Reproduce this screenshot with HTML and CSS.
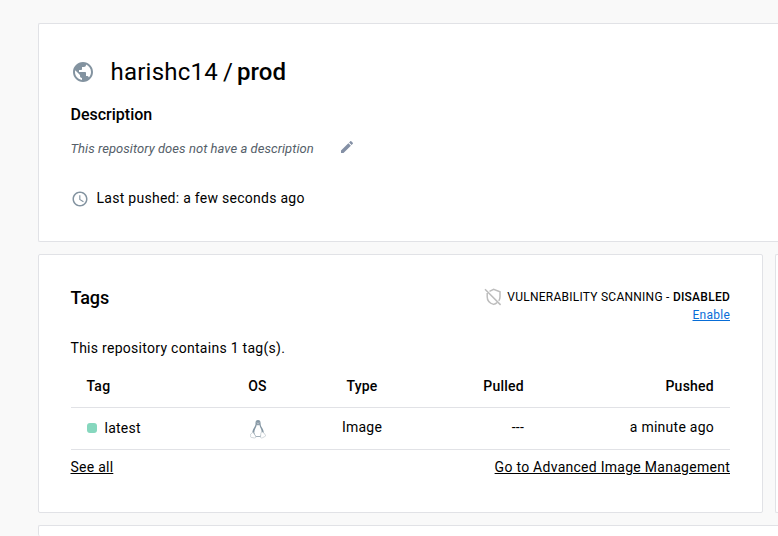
FILE: index.html
```html
<!DOCTYPE html>
<html lang="en">
<head>
<meta charset="utf-8">
<title>harishc14/prod</title>
<link rel="stylesheet" href="styles.css">
</head>
<body>
<main class="page">
  <section class="card summary">
    <h1 class="repo-title">
      <svg class="globe" viewBox="0 0 24 24"><path d="M12 2C6.480 2 2 6.480 2 12s4.480 10 10 10 10-4.480 10-10S17.520 2 12 2zm-1 17.930c-3.950-.490-7-3.850-7-7.930 0-.620.080-1.210.210-1.790L9 15v1c0 1.100.900 2 2 2v1.930zm6.900-2.540c-.260-.810-1-1.390-1.900-1.390h-1v-3c0-.550-.450-1-1-1H8v-2h2c.550 0 1-.450 1-1V7h2c1.100 0 2-.900 2-2v-.410c2.930 1.190 5 4.060 5 7.410 0 2.080-.800 3.970-2.100 5.390z"/></svg>
      <span class="owner">harishc14</span><span class="slash">/</span><span class="repo">prod</span>
    </h1>
    <h2 class="subhead">Description</h2>
    <div class="description">
      <span>This repository does not have a description</span>
      <svg class="pencil" viewBox="0 0 24 24"><path d="M3 17.250V21h3.750L17.810 9.940l-3.750-3.750L3 17.250zM20.710 7.040c.390-.390.390-1.020 0-1.410l-2.340-2.340c-.390-.390-1.020-.390-1.410 0l-1.830 1.830 3.750 3.750 1.830-1.830z"/></svg>
    </div>
    <div class="pushed">
      <svg class="clock" viewBox="0 0 24 24"><path d="M12 2C6.500 2 2 6.500 2 12s4.500 10 10 10 10-4.500 10-10S17.500 2 12 2zm0 18c-4.400 0-8-3.600-8-8s3.600-8 8-8 8 3.600 8 8-3.600 8-8 8zm.5-13H11v6l5.200 3.200.8-1.300-4.500-2.700V7z"/></svg>
      <span>Last pushed: a few seconds ago</span>
    </div>
  </section>
  <div class="columns">
    <section class="card tags">
      <header class="tags-head">
        <h2 class="tags-title">Tags</h2>
        <div class="scan">
          <div class="scan-status">
            <svg class="shield" viewBox="0 0 18 18"><path d="M5.500 3.400 9.600 1.300 16 3.700v5c0 1.500-.4 2.900-1.200 4.100M3.200 5v3.700c0 3.700 2.700 6.600 6.400 7.700 1.300-.4 2.400-1 3.400-1.800M1 1.300l15.600 15.600"/></svg>
            <span>VULNERABILITY SCANNING - <b>DISABLED</b></span>
          </div>
          <a class="enable">Enable</a>
        </div>
      </header>
      <p class="count">This repository contains 1 tag(s).</p>
      <table class="tag-table">
        <thead>
          <tr><th class="c-tag">Tag</th><th class="c-os">OS</th><th class="c-type">Type</th><th class="c-pulled">Pulled</th><th class="c-pushed">Pushed</th></tr>
        </thead>
        <tbody>
          <tr>
            <td class="c-tag"><div class="tag-name"><i class="dot"></i>latest</div></td>
            <td class="c-os"><svg class="tux" viewBox="0 0 18 22">
              <path class="tux-body" d="M9 .8C7 .8 6.100 2.300 6.200 4.300c.1 2.200-.4 3.300-1.500 5.100-1.300 2-2.200 4.200-2 6.200L5.500 20h7l2.900-4.400c.2-2.300-.7-4.500-2-6.400-1.100-1.600-1.500-2.900-1.500-5C11.900 2.100 11 .8 9 .8z"/>
              <path class="tux-belly" d="M7.600 6.300 9 7.200l1.500-.9c.5 1.800 1.200 3.200 1.900 4.600.8 1.800 1 3.600.4 5.600l-1.300 2.600H6.600l-1.700-3.600c-.2-1.700.3-3.300 1-4.700.8-1.500 1.500-2.800 1.700-4.500z"/>
              <path class="tux-face" d="M7.500 3.500h.8M9.800 3.500h.8M7.800 5.100h2.600"/>
              <path class="tux-foot" d="m3.200 14.500 3.200 4.700c.5 1.300-.3 2-1.600 1.900l-3.500-.7c-.9-.3-.7-1-.6-1.900l-.1-1.600c.1-.7 1-.4 1.500-1.100.4-.6.400-1.100 1.100-1.300zM14.200 14.500c.7.1.8.6 1.100 1.100l1.200.7c.5.700.4 1.300 1 1.900.3.600 0 .9-.6 1.200l-3 1.500c-1 .5-2.200.2-2.100-1.100l.5-4.400c.1-.8.700-1.100 1.900-.9z"/>
            </svg></td>
            <td class="c-type">Image</td>
            <td class="c-pulled">---</td>
            <td class="c-pushed">a minute ago</td>
          </tr>
        </tbody>
      </table>
      <footer class="links"><a>See all</a><a>Go to Advanced Image Management</a></footer>
    </section>
    <aside class="card side"></aside>
  </div>
  <section class="card readme"></section>
</main>
</body>
</html>
```
FILE: styles.css
```css
* { box-sizing: border-box; }
body {
  margin: 0;
  background: #f9f9f9;
  color: #000;
  font: 14px/20px Roboto, "Liberation Sans", sans-serif;
  letter-spacing: .25px;
}
h1, h2, p { margin: 0; }
svg { display: block; flex: none; fill: #8393a0; }

.page { display: flex; flex-direction: column; height: 100vh; padding: 23px 0 0 38px; }
.card { background: #fff; border: 1px solid #e1e2e6; border-radius: 2px; }
.summary, .side, .readme { border-right: 0; border-radius: 2px 0 0 2px; }

.summary { height: 219px; padding: 32px 32px 0 31.5px; }
.repo-title { display: flex; align-items: center; height: 32px; font-size: 24px; line-height: 32px; font-weight: 400; letter-spacing: .23px; }
.globe { width: 24px; height: 24px; margin-right: 16px; }
.slash { margin: 0 4px 0 5px; }
.repo { font-weight: 500; letter-spacing: 0; }
.subhead { margin-top: 17px; font-size: 16px; line-height: 20px; font-weight: 500; letter-spacing: 0; }
.description { display: flex; align-items: center; height: 20px; margin-top: 14px; font-size: 13px; font-style: italic; color: #556069; letter-spacing: .05px; }
.pencil { width: 16px; height: 16px; margin: -5px 0 0 25px; fill: #8490a5; }
.pushed { display: flex; align-items: center; height: 20px; margin-top: 29px; letter-spacing: .27px; }
.clock { width: 18px; height: 18px; margin: 1px 8px 0 0; }

.columns { display: flex; gap: 12px; margin: 12px 0; }
.tags { width: 725px; height: 259px; padding: 32px 32px 0 31.5px; }
.side { flex: 1; }
.readme { flex: 1; border-bottom: 0; }
.tags-head { display: flex; justify-content: space-between; height: 51px; }
.tags-title { font-size: 18px; line-height: 22px; font-weight: 500; letter-spacing: -.1px; }
.scan { display: flex; flex-direction: column; align-items: flex-end; font-size: 12px; line-height: 18px; }
.scan-status { display: flex; align-items: center; height: 19px; }
.scan-status b { font-weight: 500; }
.shield { width: 18px; height: 18px; margin-right: 5px; fill: none; stroke: #bdbdbd; stroke-width: 1.5; }
.enable { color: #086dd7; text-decoration: underline; }
.count { letter-spacing: .28px; }

.tag-table { width: calc(100% - .5px); table-layout: fixed; border-collapse: collapse; margin: 7px 0 0 .5px; }
.tag-table th, .tag-table td { height: 42px; padding: 0 16px; border-bottom: 1px solid #e1e2e6; text-align: left; vertical-align: middle; }
.tag-table th { font-weight: 500; }
.tag-table td:nth-child(n+3) { padding-bottom: 2px; }
.tag-table .c-tag { width: 140px; padding-left: 15.5px; }
.tag-table .c-os { width: 93px; text-align: center; }
.tag-table .c-type { width: 116px; text-align: center; }
.tag-table .c-pulled { width: 120px; text-align: right; }
.tag-table .c-pushed { text-align: right; }
.tag-name { display: flex; align-items: center; }
.dot { width: 10px; height: 10px; margin-right: 8px; border-radius: 3px; background: #86d7be; }
.tux { width: 16px; height: 20px; margin: 1px auto 0; }
.tux-body { fill: #8496a3; }
.tux-belly { fill: #fff; }
.tux-face { fill: none; stroke: #d9dfe3; stroke-width: .8; }
.tux-foot { fill: #fff; stroke: #b4bec5; stroke-width: .7; }
.links { display: flex; justify-content: space-between; margin-top: 7px; }
.links a { text-decoration: underline; }
.links a + a { letter-spacing: .27px; }
```
